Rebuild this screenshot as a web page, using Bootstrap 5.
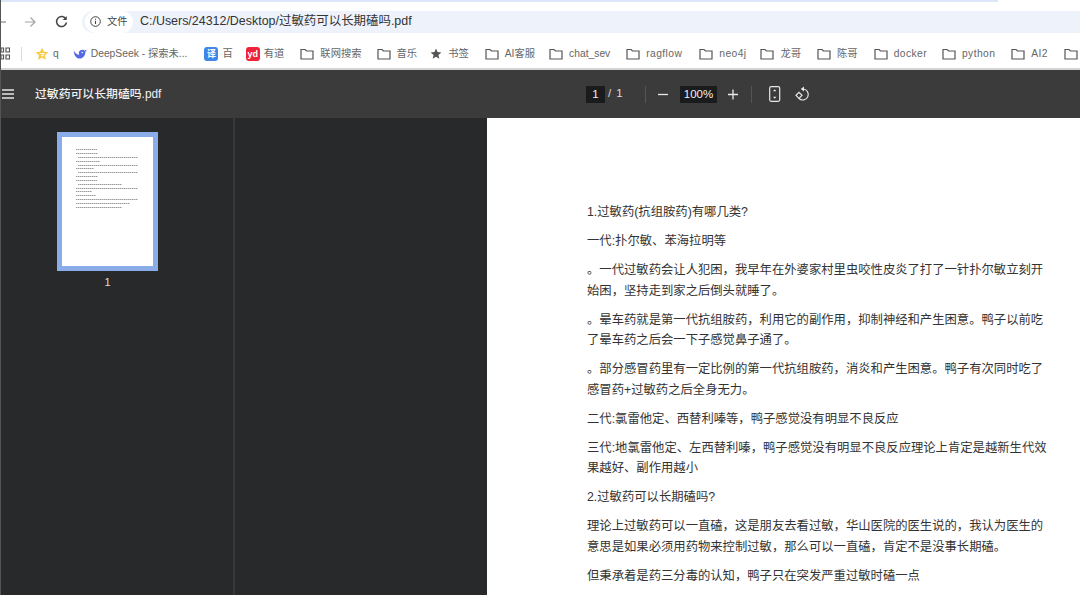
<!doctype html>
<html lang="zh-CN">
  <head>
    <meta charset="UTF-8" />
    <title>过敏药可以长期磕吗.pdf</title>
    <link rel="stylesheet" href="https://cdn.jsdelivr.net/npm/bootstrap@5.3.0/dist/css/bootstrap.min.css" />
    <style>
      html, body { height: 595px; overflow: hidden; }
      body {
        background: #fff;
        font-family: "Liberation Sans", "Noto Sans CJK SC", sans-serif;
        color: #333;
      }
      .win-edge { border-left: 1px solid #555; }
      .tab-strip { height: 7px; background: #fff; }
      .tab-strip-fill { width: 997px; height: 2px; background: #dbe6fb; }

      .addr-row { height: 29px; }
      .nav-slot { flex: 0 0 auto; }
      .nav-back { width: 23px; }
      .nav-fwd { width: 31px; }
      .nav-reload { width: 27px; }
      .addr-bar {
        background: #eef2fa;
        border-radius: 15px 0 0 15px;
        padding-left: 3px;
      }
      .site-chip {
        background: #fff;
        border-radius: 11px;
        height: 22px;
        width: 48px;
        padding-left: 5px;
        gap: 6px;
        font-size: 10.2px;
        color: #444;
        white-space: nowrap;
      }
      .addr-url { margin-left: 7px; font-size: 12.45px; color: #333; white-space: nowrap; }

      .bm-bar {
        height: 34px;
        padding-top: 3px;
        background: #fff;
        border-bottom: 2px solid #d4d4d4;
        font-size: 10.3px;
        color: #666;
        white-space: nowrap;
        overflow: hidden;
      }
      .bm-apps { width: 20px; flex: 0 0 20px; }
      .bm-sep { width: 1px; flex: 0 0 1px; height: 14px; background: #d3dbe8; margin-right: 13px; }
      .bm-item { gap: 6px; margin-right: 15px; flex: 0 0 auto; }
      .bm-ico { width: 14px; height: 14px; flex: 0 0 14px; }
      .bm-square {
        border-radius: 3px;
        color: #fff;
        font-size: 9px;
        line-height: 14px;
        text-align: center;
        font-weight: 700;
      }
      .bm-blue { background: #3f87e6; }
      .bm-red { background: #ee2238; }
      .bm-tight { gap: 4px; margin-right: 14px; }
      .bm-wide { letter-spacing: .4px; }
      .bm-m13 { margin-right: 13px; }
      .bm-m14 { margin-right: 14px; }
      .bm-m16 { margin-right: 16px; }
      .bm-m17 { margin-right: 17px; }

      .pdf-bar {
        height: 48px;
        background: #3b3b3b;
        color: #f1f1f1;
      }
      .pdf-menu { width: 34px; padding-left: 1px; }
      .pdf-title { width: 551px; padding-top: 1px; font-size: 11.85px; font-weight: 500; white-space: nowrap; }
      .pdf-field {
        background: #191b1c;
        height: 17px;
        line-height: 17px;
        font-size: 11.5px;
        text-align: center;
      }
      .pdf-page { width: 19px; }
      .pdf-zoom { width: 37px; margin-left: 11px; }
      .pdf-slash { width: 9px; text-align: center; font-size: 11.5px; color: #ddd; }
      .pdf-num { width: 11px; font-size: 11.5px; color: #ddd; text-align: center; }
      .pdf-sep { width: 1px; height: 17px; background: #555; }
      .pdf-sep-a { margin-left: 20px; }
      .pdf-sep-b { margin-left: 12px; }
      .pdf-minus { margin-left: 12px; }
      .pdf-plus { margin-left: 11px; }
      .pdf-fit { margin-left: 17px; }
      .pdf-rotate { margin-left: 14px; }

      .pdf-body { height: 477px; background: #28292b; }
      .thumb-pane {
        width: 234px;
        flex: 0 0 234px;
        border-right: 2px solid #38393b;
        padding: 14px 0 0 56px;
      }
      .thumb-frame {
        width: 101px;
        height: 139px;
        border: 5px solid #8aade9;
        background: #fff;
      }
      .thumb-num { width: 101px; text-align: center; font-size: 11px; color: #ddd; margin-top: 3px; }
      .doc-pane { padding-left: 252px; }
      .doc-page {
        width: 593px;
        height: 477px;
        background: #fff;
        padding: 84px 0 0 100px;
        color: #333;
        font-size: 12.33px;
        line-height: 20.6px;
        white-space: nowrap;
      }
      .doc-page p { margin: 0 0 8.4px; }
    </style>
  </head>

  <body>
    <div class="win-edge">
      <div class="tab-strip"><div class="tab-strip-fill"></div></div>

      <!-- address row -->
      <div class="addr-row d-flex align-items-center">
        <div class="nav-slot nav-back">
          <svg width="6" height="12" viewBox="0 0 6 12" class="d-block"><path d="M0 6h5" stroke="#888" stroke-width="1.2" fill="none"/></svg>
        </div>
        <div class="nav-slot nav-fwd">
          <svg width="12" height="12" viewBox="0 0 12 12" class="d-block"><path d="M1 6h10M6.5 1.5 11 6l-4.500 4.500" stroke="#a3a3a3" stroke-width="1.200" fill="none"/></svg>
        </div>
        <div class="nav-slot nav-reload">
          <svg width="13" height="13" viewBox="0 0 13 13" class="d-block"><path d="M11 4.200A5 5 0 1 0 11.500 7.500" stroke="#444" stroke-width="1.500" fill="none"/><path d="M11.700 1v4h-4z" fill="#444"/></svg>
        </div>
        <div class="addr-bar flex-grow-1 d-flex align-items-center">
          <div class="site-chip d-flex align-items-center">
            <svg width="11" height="11" viewBox="0 0 11 11"><circle cx="5.500" cy="5.500" r="4.800" stroke="#444" fill="none"/><path d="M5.500 4.800v3.200M5.500 2.800v1" stroke="#444" stroke-width="1.100"/></svg>
            <span>文件</span>
          </div>
          <div class="addr-url">C:/Users/24312/Desktop/过敏药可以长期磕吗.pdf</div>
        </div>
      </div>

      <!-- bookmarks -->
      <div class="bm-bar d-flex align-items-center">
        <div class="bm-apps">
          <svg width="9" height="13" viewBox="0 0 9 13" class="d-block"><path d="M0 1h2.500v4H0zM5 1h3.500v4H5zM0 8h2.500v4H0zM5 8h3.500v4H5z" fill="none" stroke="#555" stroke-width="1.200"/></svg>
        </div>
        <div class="bm-sep"></div>
        <div class="bm-item bm-tight d-flex align-items-center">
          <svg class="bm-ico" viewBox="0 0 14 14"><path d="M7 .8l1.900 4 4.400.5-3.300 3 .9 4.400L7 10.500l-3.900 2.200.9-4.400-3.300-3 4.400-.5z" fill="#f7c93e"/><path d="M4.600 6.500h4.800L6 8.800h3.500" stroke="#fff" stroke-width=".9" fill="none"/></svg>
          <span>q</span>
        </div>
        <div class="bm-item bm-tight bm-m17 d-flex align-items-center">
          <svg class="bm-ico" viewBox="0 0 14 14"><path d="M.8 3.500c1.500 3 3.500 4 5.500 4.300C5.500 6.200 5.700 4.300 7.300 3.300c1.700-1 3.700-.7 4.400.5.600-.6 1.300-1 2-1.100-.3 1-.8 1.600-1.400 2.100.3 3.500-2.300 6.800-5.600 6.800-3.500 0-5.800-3.400-5.900-8.100z" fill="#5369e8"/><circle cx="9.300" cy="5.500" r=".8" fill="#fff"/></svg>
          <span>DeepSeek - 探索未...</span>
        </div>
        <div class="bm-item bm-tight bm-m13 d-flex align-items-center">
          <div class="bm-ico bm-square bm-blue">译</div>
          <span>百</span>
        </div>
        <div class="bm-item bm-tight bm-m16 d-flex align-items-center">
          <div class="bm-ico bm-square bm-red">yd</div>
          <span>有道</span>
        </div>
        <div class="bm-item d-flex align-items-center"><svg class="bm-ico" viewBox="0 0 14 14"><use href="#ico-folder"/></svg><span>联网搜索</span></div>
        <div class="bm-item bm-m13 d-flex align-items-center"><svg class="bm-ico" viewBox="0 0 14 14"><use href="#ico-folder"/></svg><span>音乐</span></div>
        <div class="bm-item bm-tight bm-m16 d-flex align-items-center">
          <svg class="bm-ico" viewBox="0 0 14 14"><path d="M6 1.500l1.500 3.600 3.900.3-3 2.500.9 3.800L6 9.700l-3.300 2 .9-3.800-3-2.500 3.900-.3z" fill="#555"/></svg>
          <span>书签</span>
        </div>
        <div class="bm-item bm-m14 d-flex align-items-center"><svg class="bm-ico" viewBox="0 0 14 14"><use href="#ico-folder"/></svg><span>AI客服</span></div>
        <div class="bm-item bm-m16 d-flex align-items-center"><svg class="bm-ico" viewBox="0 0 14 14"><use href="#ico-folder"/></svg><span>chat_sev</span></div>
        <div class="bm-item bm-m17 d-flex align-items-center"><svg class="bm-ico" viewBox="0 0 14 14"><use href="#ico-folder"/></svg><span class="bm-wide">ragflow</span></div>
        <div class="bm-item bm-m14 d-flex align-items-center"><svg class="bm-ico" viewBox="0 0 14 14"><use href="#ico-folder"/></svg><span class="bm-wide">neo4j</span></div>
        <div class="bm-item bm-m16 d-flex align-items-center"><svg class="bm-ico" viewBox="0 0 14 14"><use href="#ico-folder"/></svg><span>龙哥</span></div>
        <div class="bm-item bm-m16 d-flex align-items-center"><svg class="bm-ico" viewBox="0 0 14 14"><use href="#ico-folder"/></svg><span>陈哥</span></div>
        <div class="bm-item d-flex align-items-center"><svg class="bm-ico" viewBox="0 0 14 14"><use href="#ico-folder"/></svg><span class="bm-wide">docker</span></div>
        <div class="bm-item bm-m16 d-flex align-items-center"><svg class="bm-ico" viewBox="0 0 14 14"><use href="#ico-folder"/></svg><span class="bm-wide">python</span></div>
        <div class="bm-item bm-m16 d-flex align-items-center"><svg class="bm-ico" viewBox="0 0 14 14"><use href="#ico-folder"/></svg><span class="bm-wide">AI2</span></div>
        <div class="bm-item d-flex align-items-center"><svg class="bm-ico" viewBox="0 0 14 14"><use href="#ico-folder"/></svg></div>
      </div>

      <!-- pdf viewer toolbar -->
      <div class="pdf-bar d-flex align-items-center">
        <div class="pdf-menu">
          <svg width="13" height="10" viewBox="0 0 13 10" class="d-block"><path d="M0 1h12M0 5h12M0 9h12" stroke="#e8e8e8" stroke-width="1.300"/></svg>
        </div>
        <div class="pdf-title">过敏药可以长期磕吗.pdf</div>
        <div class="pdf-field pdf-page">1</div>
        <div class="pdf-slash">/</div>
        <div class="pdf-num">1</div>
        <div class="pdf-sep pdf-sep-a"></div>
        <svg width="11" height="11" viewBox="0 0 11 11" class="pdf-minus"><path d="M0 5.500h10" stroke="#e8e8e8" stroke-width="1.300"/></svg>
        <div class="pdf-field pdf-zoom">100%</div>
        <svg width="11" height="11" viewBox="0 0 11 11" class="pdf-plus"><path d="M0 5.500h10M5 .5v10" stroke="#e8e8e8" stroke-width="1.300"/></svg>
        <div class="pdf-sep pdf-sep-b"></div>
        <svg width="12" height="16" viewBox="0 0 12 16" class="pdf-fit"><rect x=".7" y=".7" width="10" height="14.600" rx="1.500" fill="none" stroke="#e8e8e8" stroke-width="1.200"/><path d="M5.700 3.200 4 5.200h3.400zM5.700 12.800 4 10.800h3.400z" fill="#e8e8e8"/></svg>
        <svg width="15" height="16" viewBox="0 0 15 16" class="pdf-rotate"><path d="M8 3a5.500 5.500 0 1 1-4 9.500" fill="none" stroke="#e8e8e8" stroke-width="1.200"/><path d="M9 .5v5L5.800 3z" fill="#e8e8e8"/><path d="M4 6.300 7 9.300 4 12.300 1 9.300z" fill="none" stroke="#e8e8e8" stroke-width="1.200"/></svg>
      </div>

      <div class="pdf-body d-flex">
        <div class="thumb-pane">
          <div class="thumb-frame">
            <svg width="91" height="129" viewBox="0 0 91 129" class="d-block">
              <g stroke="#9a9a9a" stroke-width="1" stroke-dasharray="1.500 .5">
                <path d="M14 12.500h21M14 16.500h22M16 20.500h60M14 24.500h24M16 28.500h60M14 31.500h18M16 35.500h60M14 39.500h22M14 43.500h21M16 47.500h44M14 51.500h62M14 54.500h16M14 58.500h20M14 62.500h62M14 66.500h54M14 70.500h46"/>
              </g>
            </svg>
          </div>
          <div class="thumb-num">1</div>
        </div>
        <div class="doc-pane">
          <div class="doc-page">
            <p>1.过敏药(抗组胺药)有哪几类?</p>
            <p>一代:扑尔敏、苯海拉明等</p>
            <p>。一代过敏药会让人犯困，我早年在外婆家村里虫咬性皮炎了打了一针扑尔敏立刻开<br />始困，坚持走到家之后倒头就睡了。</p>
            <p>。晕车药就是第一代抗组胺药，利用它的副作用，抑制神经和产生困意。鸭子以前吃<br />了晕车药之后会一下子感觉鼻子通了。</p>
            <p>。部分感冒药里有一定比例的第一代抗组胺药，消炎和产生困意。鸭子有次同时吃了<br />感冒药+过敏药之后全身无力。</p>
            <p>二代:氯雷他定、西替利嗪等，鸭子感觉没有明显不良反应</p>
            <p>三代:地氯雷他定、左西替利嗪，鸭子感觉没有明显不良反应理论上肯定是越新生代效<br />果越好、副作用越小</p>
            <p>2.过敏药可以长期磕吗?</p>
            <p>理论上过敏药可以一直磕，这是朋友去看过敏，华山医院的医生说的，我认为医生的<br />意思是如果必须用药物来控制过敏，那么可以一直磕，肯定不是没事长期磕。</p>
            <p>但秉承着是药三分毒的认知，鸭子只在突发严重过敏时磕一点</p>
          </div>
        </div>
      </div>
    </div>

    <svg width="0" height="0" class="d-block">
      <symbol id="ico-folder" viewBox="0 0 14 14">
        <path d="M1 2.500h4l1.500 1.500H13v8H1z" fill="none" stroke="#555" stroke-width="1.200"/>
      </symbol>
    </svg>

    <script src="https://cdn.jsdelivr.net/npm/bootstrap@5.3.0/dist/js/bootstrap.bundle.min.js"></script>
  </body>
</html>
